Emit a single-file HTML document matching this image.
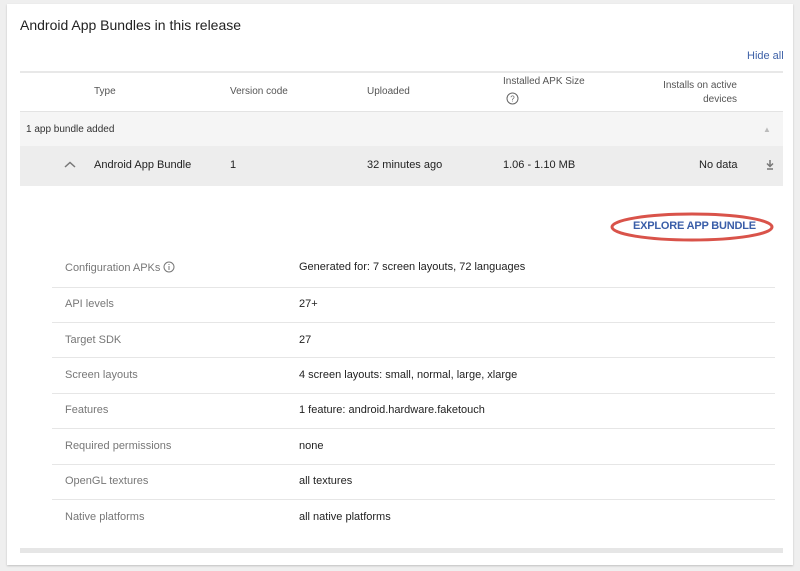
<!DOCTYPE html><html><head><style>
body{margin:0;width:800px;height:571px;background:#efefef;font-family:"Liberation Sans",sans-serif;position:relative;overflow:hidden}
.card{position:absolute;left:7px;top:4px;width:786px;height:561px;background:#fff;box-shadow:0 1px 2px rgba(0,0,0,.2)}
.a{position:absolute;white-space:nowrap}
.h{font-size:10px;color:#555}
.t{font-size:11px;color:#222}
.l{font-size:11px;color:#777}
.line{position:absolute;height:1px;background:#e6e6e6}
</style></head><body>
<div class="card"></div>
<div class="a" style="left:20px;top:17px;font-size:14px;color:#222">Android App Bundles in this release</div>
<div class="a" style="left:747px;top:50px;font-size:11px;color:#3f62a8">Hide all</div>
<div class="line" style="left:20px;top:71px;width:763px;background:#e8e8e8;height:2px"></div>
<div class="a h" style="left:94px;top:86px">Type</div>
<div class="a h" style="left:230px;top:86px">Version code</div>
<div class="a h" style="left:367px;top:86px">Uploaded</div>
<div class="a h" style="left:503px;top:76px">Installed APK Size</div>
<svg class="a" style="left:506px;top:92px" width="13" height="13"><circle cx="6.5" cy="6.5" r="5.5" fill="none" stroke="#666" stroke-width="1"/><text x="6.5" y="9.5" font-size="8" text-anchor="middle" fill="#666" font-family="Liberation Sans">?</text></svg>
<div class="a h" style="left:662px;top:79px;text-align:right;width:75px;white-space:normal;line-height:14px">Installs on active devices</div>
<div class="a" style="left:20px;top:111px;width:763px;height:35px;background:#f5f5f5;border-top:1px solid #e3e3e3"></div>
<div class="a" style="left:26px;top:124px;font-size:10px;color:#333">1 app bundle added</div>
<div class="a" style="left:763px;top:125px;font-size:8px;color:#bbb">▲</div>
<div class="a" style="left:20px;top:146px;width:763px;height:40px;background:#ededed"></div>
<svg class="a" style="left:64px;top:161px" width="12" height="8"><path d="M1 6 L6 1.5 L11 6" fill="none" stroke="#777" stroke-width="1.5"/></svg>
<div class="a t" style="left:94px;top:159px">Android App Bundle</div>
<div class="a t" style="left:230px;top:159px">1</div>
<div class="a t" style="left:367px;top:159px">32 minutes ago</div>
<div class="a t" style="left:503px;top:159px">1.06 - 1.10 MB</div>
<div class="a t" style="left:699px;top:159px">No data</div>
<svg class="a" style="left:765px;top:159px" width="10" height="12"><path d="M5 1 V7 M2 4.5 L5 7.5 L8 4.5 M2 10 H8" fill="none" stroke="#777" stroke-width="1.5"/></svg>
<svg class="a" style="left:608px;top:210px" width="168" height="36"><ellipse cx="84" cy="17" rx="80" ry="13" fill="none" stroke="#d9534a" stroke-width="3"/></svg>
<div class="a" style="left:633px;top:220px;font-size:11px;color:#3a5ea8;font-weight:bold;letter-spacing:-0.2px">EXPLORE APP BUNDLE</div>
<div class="a l" style="left:65px;top:261px">Configuration APKs <svg width="12" height="12" style="vertical-align:-2px"><circle cx="6" cy="6" r="5" fill="none" stroke="#777"/><path d="M6 5V9M6 3v1" stroke="#777"/></svg></div>
<div class="a t" style="left:299px;top:261px">Generated for: 7 screen layouts, 72 languages</div>
<div class="line" style="left:52px;top:287px;width:723px"></div>
<div class="a l" style="left:65px;top:298px">API levels</div><div class="a t" style="left:299px;top:298px">27+</div>
<div class="line" style="left:52px;top:322px;width:723px"></div>
<div class="a l" style="left:65px;top:334px">Target SDK</div><div class="a t" style="left:299px;top:334px">27</div>
<div class="line" style="left:52px;top:357px;width:723px"></div>
<div class="a l" style="left:65px;top:369px">Screen layouts</div><div class="a t" style="left:299px;top:369px">4 screen layouts: small, normal, large, xlarge</div>
<div class="line" style="left:52px;top:393px;width:723px"></div>
<div class="a l" style="left:65px;top:404px">Features</div><div class="a t" style="left:299px;top:404px">1 feature: android.hardware.faketouch</div>
<div class="line" style="left:52px;top:428px;width:723px"></div>
<div class="a l" style="left:65px;top:440px">Required permissions</div><div class="a t" style="left:299px;top:440px">none</div>
<div class="line" style="left:52px;top:464px;width:723px"></div>
<div class="a l" style="left:65px;top:475px">OpenGL textures</div><div class="a t" style="left:299px;top:475px">all textures</div>
<div class="line" style="left:52px;top:499px;width:723px"></div>
<div class="a l" style="left:65px;top:511px">Native platforms</div><div class="a t" style="left:299px;top:511px">all native platforms</div>
<div class="a" style="left:20px;top:548px;width:763px;height:5px;background:#e6e6e6"></div>
</body></html>
